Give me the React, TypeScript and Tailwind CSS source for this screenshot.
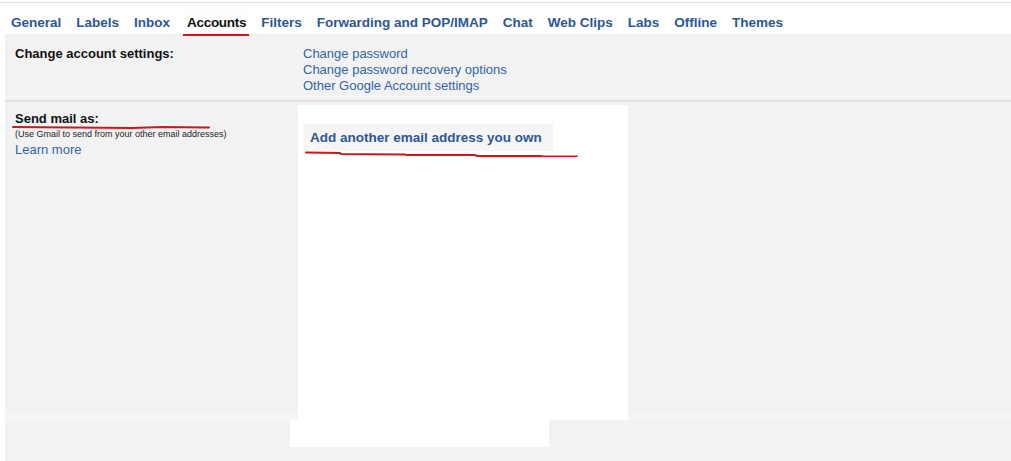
const tabs = [
  'General',
  'Labels',
  'Inbox',
  'Accounts',
  'Filters',
  'Forwarding and POP/IMAP',
  'Chat',
  'Web Clips',
  'Labs',
  'Offline',
  'Themes',
]

const accountLinks = ['Change password', 'Change password recovery options', 'Other Google Account settings']

function Scribble({ width, points }: { width: number; points: string }) {
  return (
    <svg width={width} height={6} viewBox={`0 0 ${width} 6`} className="pointer-events-none">
      <polyline points={points} fill="none" stroke="#c8191f" strokeWidth={2} strokeLinecap="round" />
    </svg>
  )
}

function TabBar() {
  return (
    <div className="flex h-[31px] items-end gap-[15px] bg-white pb-[3px] pl-[11px]">
      {tabs.map((t) =>
        t === 'Accounts' ? (
          <div key={t} className="relative -mb-[3px] ml-[-3px] mr-[-4px] flex h-[26px] items-start bg-[#fdfdfd] pl-[5px] pr-[4px] pt-[7px]">
            <span className="text-[13.5px] font-bold leading-4 tracking-[-0.3px] text-[#111]">{t}</span>
            <span className="absolute -bottom-[2px] left-[1px] right-[1px] h-[2px] bg-[#c8191f]" />
          </div>
        ) : (
          <span key={t} className="text-[13.5px] font-bold leading-4 text-[#2d5796]">
            {t}
          </span>
        ),
      )}
    </div>
  )
}

export default function App() {
  return (
    <div className="h-[461px] w-[1011px] overflow-hidden bg-white font-['Liberation_Sans',Arial,sans-serif]">
      <div className="h-[2px]" />
      <div className="h-px bg-[#e2e2e2]" />
      <TabBar />

      <div className="ml-[5px] flex h-[427px] flex-col bg-[#f2f2f2]">
        {/* account settings */}
        <div className="grid h-[62px] grid-cols-[293px_1fr] pt-[12px] text-[13px] leading-4">
          <div className="pl-[10px] font-bold text-[#111]">Change account settings:</div>
          <div className="flex flex-col pl-[5px] text-[#3562a8]">
            {accountLinks.map((l) => (
              <span key={l}>{l}</span>
            ))}
          </div>
        </div>
        <div className="h-px bg-[#f9f9f9]" />
        <div className="h-[3px]" />
        <div className="h-[2px] bg-[#e1e1e1]" />

        {/* send mail as */}
        <div className="grid h-[318px] grid-cols-[293px_330px_1fr]">
          <div className="flex flex-col">
            <div className="relative flex-1 pl-[10px] pt-[9px]">
              <div className="text-[13px] font-bold leading-4 text-[#111]">Send mail as:</div>
              <div className="absolute left-[7px] top-[22px]">
                <Scribble width={198} points="1,3 60,3.5 120,4 150,3 197,3.5" />
              </div>
              <div className="mt-[2px] text-[9px] leading-[11px] text-[#222]">
                (Use Gmail to send from your other email addresses)
              </div>
              <div className="mt-[2px] text-[13px] leading-4 text-[#3562a8]">Learn more</div>
            </div>
            <div className="h-[7px] bg-[#f6f6f6]" />
          </div>

          <div className="relative mt-[3px] bg-white">
            <div className="ml-[5px] mt-[19px] flex h-[27px] w-[250px] items-center bg-[#f5f5f5] pl-[7px] pt-[2px]">
              <span className="text-[13.5px] font-bold text-[#2d5796]">Add another email address you own</span>
            </div>
            <div className="absolute left-[7px] top-[46px]">
              <Scribble width={274} points="1,1.5 35,2 36,3 100,3.5 102,4 170,4 172,5 236,5 237,5.5 272,5.5" />
            </div>
          </div>

          <div className="flex flex-col">
            <div className="flex-1" />
            <div className="h-[7px] bg-[#f5f5f5]" />
          </div>
        </div>

        {/* footer blank */}
        <div className="flex h-[27px]">
          <div className="ml-[285px] w-[259px] bg-white" />
        </div>
      </div>
    </div>
  )
}
